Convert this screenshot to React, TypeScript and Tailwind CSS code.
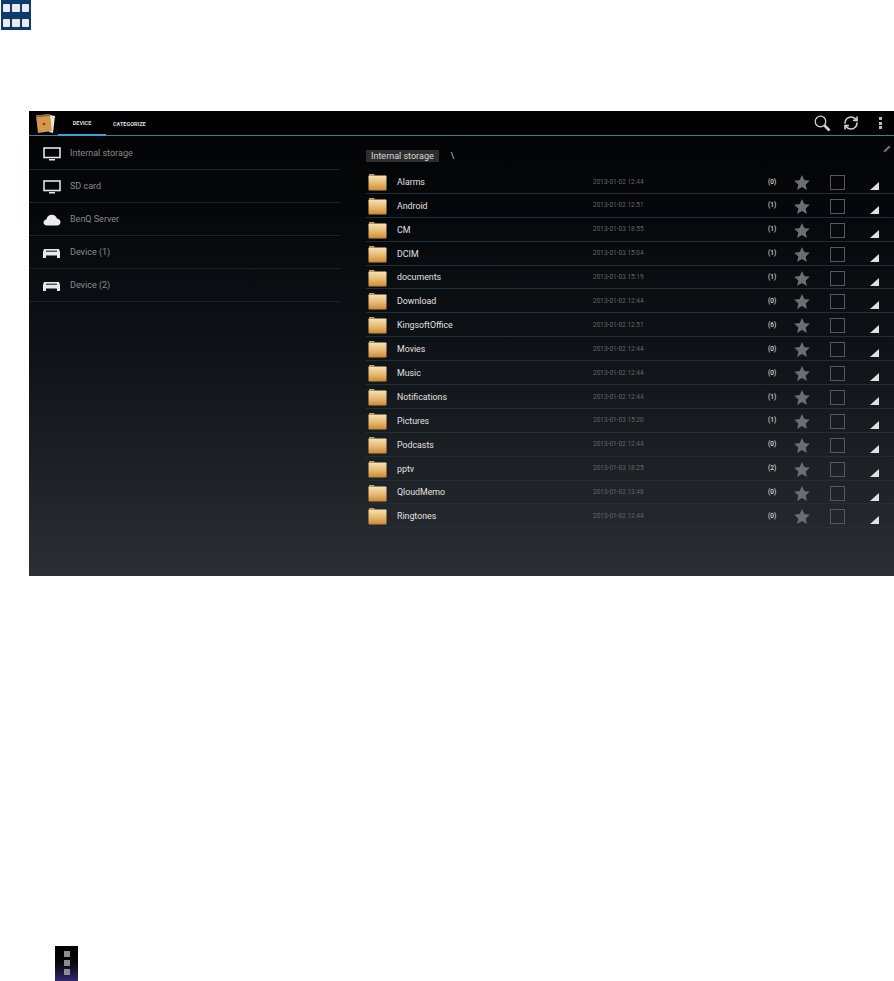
import { RefreshCw } from "lucide-react";

const folders = [
  { name: "Alarms", date: "2013-01-02 12:44", count: 0 },
  { name: "Android", date: "2013-01-02 12:51", count: 1 },
  { name: "CM", date: "2013-01-03 18:55", count: 1 },
  { name: "DCIM", date: "2013-01-03 15:04", count: 1 },
  { name: "documents", date: "2013-01-03 15:19", count: 1 },
  { name: "Download", date: "2013-01-02 12:44", count: 0 },
  { name: "KingsoftOffice", date: "2013-01-02 12:51", count: 6 },
  { name: "Movies", date: "2013-01-02 12:44", count: 0 },
  { name: "Music", date: "2013-01-02 12:44", count: 0 },
  { name: "Notifications", date: "2013-01-02 12:44", count: 1 },
  { name: "Pictures", date: "2013-01-03 15:20", count: 1 },
  { name: "Podcasts", date: "2013-01-02 12:44", count: 0 },
  { name: "pptv", date: "2013-01-03 18:25", count: 2 },
  { name: "QloudMemo", date: "2013-01-02 13:48", count: 0 },
  { name: "Ringtones", date: "2013-01-02 12:44", count: 0 },
];

const sources = [
  { name: "Internal storage", icon: "monitor" },
  { name: "SD card", icon: "monitor" },
  { name: "BenQ Server", icon: "cloud" },
  { name: "Device (1)", icon: "device" },
  { name: "Device (2)", icon: "device" },
];

function SourceIcon({ type }: { type: string }) {
  if (type === "monitor") {
    return (
      <svg width="18" height="14" viewBox="0 0 18 14">
        <rect x="1" y="1" width="16" height="9.500" fill="none" stroke="#e4e4e4" strokeWidth="1.600" />
        <path d="M6 12h6v1.500H6z" fill="#e4e4e4" />
      </svg>
    );
  }
  if (type === "cloud") {
    return (
      <svg width="18" height="12" viewBox="0 0 18 12">
        <path
          d="M4 11.500C1.800 11.500.5 10.100.5 8.500c0-1.600 1.200-2.800 2.800-3C3.900 2.600 6.200.7 8.800.7c2.500 0 4.500 1.600 5.100 3.900 2.100.2 3.600 1.800 3.600 3.700 0 1.800-1.400 3.200-3.400 3.200z"
          fill="#ececec"
        />
      </svg>
    );
  }
  return (
    <svg width="17" height="9" viewBox="0 0 17 9">
      <path d="M1 0h15l1 3v6h-3V6.500H3V9H0V3z" fill="#e8e8e8" />
      <rect x="3" y="1.500" width="11" height="1.500" fill="#555" />
    </svg>
  );
}

function Folder() {
  return (
    <svg width="19" height="17" viewBox="0 0 19 17">
      <defs>
        <linearGradient id="folderBody" x1="0" y1="0" x2="0" y2="1">
          <stop offset="0" stopColor="#f6e2b4" />
          <stop offset="0.550" stopColor="#e6b76e" />
          <stop offset="1" stopColor="#c98a35" />
        </linearGradient>
      </defs>
      <path d="M1 0h5l1 1.500H1z" fill="#c99a4a" />
      <rect x="0.500" y="1.500" width="18" height="15" rx="0.800" fill="url(#folderBody)" />
    </svg>
  );
}

function Star() {
  return (
    <svg width="16" height="15" viewBox="0 0 16 15">
      <path d="M8 0l2.300 5.100 5.500.6-4.100 3.700 1.200 5.500L8 12.100l-4.900 2.800 1.200-5.500L.2 5.700l5.500-.6z" fill="#6b6d70" />
    </svg>
  );
}

export default function App() {
  return (
    <div className="w-[894px] h-[981px] bg-white overflow-hidden font-['Roboto',sans-serif]">
      {/* top thumbnail */}
      <div className="w-[30px] h-[30px] bg-[#0d3a6b] grid grid-cols-3 content-start gap-x-[2px] gap-y-[7px] px-[2px] pt-[4px] ml-px">
        {[0, 1, 2, 3, 4, 5].map((i) => (
          <div key={i} className="bg-[#e8ecf0] h-[8px] rounded-[1px]" />
        ))}
      </div>

      {/* tablet screen */}
      <div className="ml-[29px] mt-[81px] w-[865px] h-[465px] flex flex-col bg-gradient-to-b from-[#020304] via-[#0e1216] to-[#2b2e33]">
        <header className="h-[25px] shrink-0 bg-black border-b border-[#3c7f9c] flex items-center">
          <div className="w-[29px] pl-[6px] flex items-center">
            <svg width="21" height="21" viewBox="0 0 21 21">
              <path d="M15 2l5 1-2 17-4-1z" fill="#e8e4da" />
              <path d="M1 2.500 15 1l2 17-14 2z" fill="#d29a4c" />
              <path d="M1 2.500 15 1l.3 2L1.300 4.500z" fill="#8a6a3a" />
              <circle cx="9" cy="11" r="1.300" fill="#9a2f1c" />
            </svg>
          </div>
          <div className="h-[25px] w-[48px] border-b-2 border-[#35a5d8] flex items-center justify-center pt-[3px] text-[5.500px] font-bold text-[#dcdcdc]">
            DEVICE
          </div>
          <div className="ml-[7px] pt-[3px] text-[5.500px] font-bold text-[#dcdcdc]">CATEGORIZE</div>
          <div className="ml-auto flex items-center text-[#d0d0d0]">
            <svg width="17" height="17" viewBox="0 0 17 17">
              <circle cx="6.500" cy="6.500" r="5.300" fill="none" stroke="#d0d0d0" strokeWidth="1.300" />
              <path d="M10.500 10.500 15.500 15.500" stroke="#d0d0d0" strokeWidth="2.600" />
            </svg>
            <RefreshCw size={16} strokeWidth={2.400} className="ml-[12px]" />
            <div className="ml-[20px] mr-[12px] flex flex-col gap-[1.500px]">
              <div className="w-[3px] h-[3px] bg-[#b8b8b8]" />
              <div className="w-[3px] h-[3px] bg-[#b8b8b8]" />
              <div className="w-[3px] h-[3px] bg-[#b8b8b8]" />
            </div>
          </div>
        </header>

        <div className="flex flex-1 min-h-0">
          {/* sources */}
          <aside className="w-[311px] shrink-0 pt-px">
            {sources.map((s) => (
              <div key={s.name} className="h-[33px] border-b border-[#1f2226] flex items-center pt-[2px]">
                <div className="w-[41px] pl-[14px] flex items-center">
                  <SourceIcon type={s.icon} />
                </div>
                <span className="text-[9px] text-[#8a8a8a]">{s.name}</span>
              </div>
            ))}
          </aside>

          {/* file list */}
          <main className="flex-1 pl-[26px] pt-[14px] relative">
            <div className="flex items-center h-[12px]">
              <span className="bg-[#2e2e2e] text-[#d8d8d8] text-[9px] leading-[12px] px-[5px]">Internal storage</span>
              <span className="ml-[12px] text-[#d0d0d0] text-[8.500px]">\</span>
            </div>
            <div className="absolute right-[3px] top-[12px] w-[8px] h-[2px] bg-[#777] -rotate-45" />
            <div className="mt-[8px]">
              {folders.map((f) => (
                <div key={f.name} className="h-[23.900px] border-b border-[#1e3038] flex items-center pt-[2px]">
                  <div className="w-[31px] pl-[2px] flex items-center">
                    <Folder />
                  </div>
                  <span className="w-[196px] text-[8.800px] text-[#e0e0e0]">{f.name}</span>
                  <span className="w-[175px] text-[6.500px] text-[#666]">{f.date}</span>
                  <span className="w-[26px] text-[6.500px] font-medium text-[#d8d8d8]">({f.count})</span>
                  <Star />
                  <div className="ml-[20px] w-[15px] h-[15px] border border-[#55585c]" />
                  <div className="ml-[25px] mt-[7px] w-0 h-0 border-b-[8px] border-l-[9px] border-b-[#e0e0e0] border-l-transparent" />
                </div>
              ))}
            </div>
          </main>
        </div>
      </div>

      {/* overflow button thumbnail */}
      <div className="ml-[55px] mt-[370px] w-[23px] h-[35px] bg-gradient-to-b from-black via-[#0a0810] to-[#34286e] flex flex-col items-center pt-[5px] gap-[3px]">
        <div className="w-[6px] h-[6px] bg-[#8d8d8d]" />
        <div className="w-[6px] h-[6px] bg-[#8d8d8d]" />
        <div className="w-[6px] h-[6px] bg-[#8d8d8d]" />
      </div>
    </div>
  );
}
